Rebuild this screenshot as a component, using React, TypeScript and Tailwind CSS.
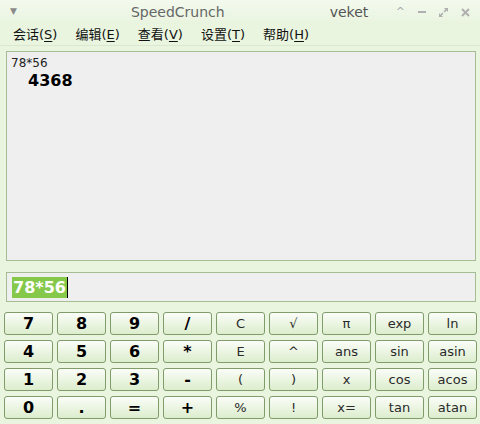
import React from "react";

const font = { fontFamily: '"DejaVu Sans", "Noto Sans CJK SC", sans-serif' };

const rows: string[][] = [
  ["7", "8", "9", "/", "C", "√", "π", "exp", "ln"],
  ["4", "5", "6", "*", "E", "^", "ans", "sin", "asin"],
  ["1", "2", "3", "-", "(", ")", "x", "cos", "acos"],
  ["0", ".", "=", "+", "%", "!", "x=", "tan", "atan"],
];

const bold = new Set(["0", "1", "2", "3", "4", "5", "6", "7", "8", "9", "/", "*", "-", "+", ".", "="]);

const menus = [
  { label: "会话", key: "S" },
  { label: "编辑", key: "E" },
  { label: "查看", key: "V" },
  { label: "设置", key: "T" },
  { label: "帮助", key: "H" },
];

export default function App() {
  return (
    <div className="flex h-[424px] w-[480px] flex-col bg-[#eaf5df] text-black" style={font}>
      {/* title bar */}
      <div className="flex h-[24px] items-center bg-gradient-to-b from-[#f3faee] to-[#e9f4df] pl-[10px] pr-[10px] text-[14px] text-[#666]">
        <span className="text-[9px] text-[#8a8a8a]">▼</span>
        <span className="ml-[114px]">SpeedCrunch</span>
        <span className="ml-[105px] text-[#555]">veket</span>
        <div className="ml-auto flex items-center gap-[13px] text-[11px] text-[#a8a8a8]">
          <span>^</span>
          <span className="h-[2px] w-[8px] bg-[#b0b0b0]" />
          <svg width="9" height="9" viewBox="0 0 9 9" fill="#b0b0b0">
            <path d="M5 0h4v4L7.6 2.6 5.7 4.5 4.5 3.3 6.4 1.4z" />
            <path d="M0 5v4h4L2.6 7.6 4.5 5.7 3.3 4.5 1.4 6.4z" />
          </svg>
          <svg width="9" height="9" viewBox="0 0 9 9" stroke="#b0b0b0" strokeWidth="2">
            <path d="M1 1l7 7M8 1l-7 7" />
          </svg>
        </div>
      </div>

      {/* menu bar */}
      <div className="flex h-[22px] items-center gap-[18px] border-b border-[#dbe8cf] pl-[13px] text-[13px] text-[#111]">
        {menus.map((m) => (
          <span key={m.key}>
            {m.label}(<span className="underline underline-offset-2">{m.key}</span>)
          </span>
        ))}
      </div>

      {/* result display */}
      <div className="mx-[6px] mt-[5px] h-[210px] w-[470px] border border-[#a5bd92] bg-[#efefef] px-[4px] pt-[4px]">
        <div className="text-[12px] leading-[15px] text-[#222]">78*56</div>
        <div className="pl-[17px] pt-[1px] text-[16px] font-bold leading-[18px]">4368</div>
      </div>

      {/* input */}
      <div className="mx-[6px] mt-[11px] flex h-[30px] w-[470px] items-center border border-[#a5bd92] bg-[#efefef] pl-[5px]">
        <span className="bg-[#86c94a] px-[1px] text-[16px] font-bold leading-[21px] text-white">78*56</span>
        <span className="h-[21px] w-[1px] bg-black" />
      </div>

      {/* keypad */}
      <div className="ml-[4px] mt-[10px] grid w-[473px] grid-cols-9 gap-x-[4px] gap-y-[5px]">
        {rows.flat().map((k) => (
          <button
            key={k}
            className={
              "flex h-[23px] items-center justify-center rounded-[3px] border border-[#7f9c6a] bg-gradient-to-b from-[#fbfdf8] to-[#dcedcd] leading-none " +
              (bold.has(k) ? "text-[16px] font-bold text-black" : "text-[13px] text-[#2a2a2a]")
            }
          >
            {k}
          </button>
        ))}
      </div>
    </div>
  );
}
